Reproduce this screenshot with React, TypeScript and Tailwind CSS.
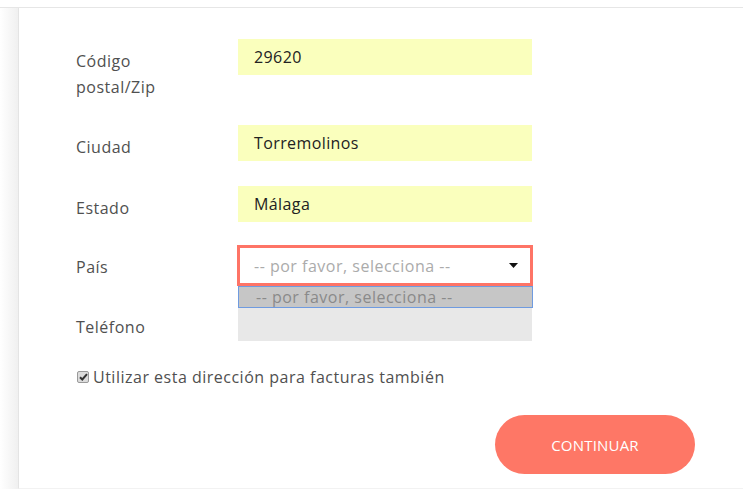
import React from "react";

const font = { fontFamily: '"Open Sans", "Liberation Sans", sans-serif' };

function Row({ label, children, className = "" }: { label: React.ReactNode; children: React.ReactNode; className?: string }) {
  return (
    <div className={`flex ${className}`}>
      <div className="w-[162px] pt-[9px] text-[16px] leading-[26px] tracking-[0.5px] text-[#505050]">{label}</div>
      <div className="w-[294px]">{children}</div>
    </div>
  );
}

function Field({ value }: { value: string }) {
  return (
    <div className="h-[36px] bg-[#faffbd] pl-[16px] flex items-center text-[16px] tracking-[0.4px] text-[#222]">{value}</div>
  );
}

export default function App() {
  return (
    <div className="w-[743px] h-[489px] bg-white overflow-hidden" style={font}>
      <div className="h-[7px] bg-white" />
      <div className="h-[1px] bg-[#e6e6e6]" />
      <div className="flex h-[481px]">
        <div className="w-[18px] bg-gradient-to-r from-white to-[#f0f0f0]" />
        <div className="flex-1 border-l border-[#e4e4e4] bg-white border-b border-b-[#f2f2f2] pl-[57px] pt-[31px] relative">
          <Row label={<>Código<br />postal/Zip</>}>
            <Field value="29620" />
          </Row>
          <Row label="Ciudad" className="mt-[25px]">
            <Field value="Torremolinos" />
          </Row>
          <Row label="Estado" className="mt-[25px]">
            <Field value="Málaga" />
          </Row>
          <Row label="País" className="mt-[23px]">
            <div className="relative -ml-[1px] w-[296px]">
              <div className="h-[41px] border-[3px] border-[#fe7466] bg-white flex items-center pl-[14px] pr-[12px] text-[16px] tracking-[0.5px] text-[#ababab]">
                <span className="flex-1">-- por favor, selecciona --</span>
                <svg width="9" height="5" viewBox="0 0 9 5"><path d="M0 0h9L4.5 5z" fill="#111" /></svg>
              </div>
              <div className="absolute left-[1px] top-[41px] w-[295px] h-[22px] z-10 bg-[#c6c6c6] border border-[#6f9be0] pl-[17px] flex items-center text-[16px] leading-[20px] tracking-[0.5px] text-[#8a8a8a]">
                -- por favor, selecciona --
              </div>
            </div>
          </Row>
          <Row label="Teléfono" className="mt-[19px]">
            <div className="h-[36px] bg-[#e8e8e8]" />
          </Row>
          <div className="mt-[24px] flex items-center pl-[1px] gap-[4px] text-[16px] tracking-[0.5px] text-[#505050]">
            <span className="w-[12px] h-[12px] rounded-[2px] bg-[#dcdcdc] border border-[#9a9a9a] flex items-center justify-center">
              <svg width="9" height="8" viewBox="0 0 9 8"><path d="M1 4.2l2.3 2.3L8 1.2" stroke="#333" strokeWidth="2" fill="none" /></svg>
            </span>
            <span>Utilizar esta dirección para facturas también</span>
          </div>
          <div className="mt-[26px] flex pl-[419px]">
            <button className="w-[200px] h-[59px] rounded-full bg-[#fe7766] text-white text-[15px] tracking-[0.2px] pt-[2px]">CONTINUAR</button>
          </div>
        </div>
      </div>
    </div>
  );
}
